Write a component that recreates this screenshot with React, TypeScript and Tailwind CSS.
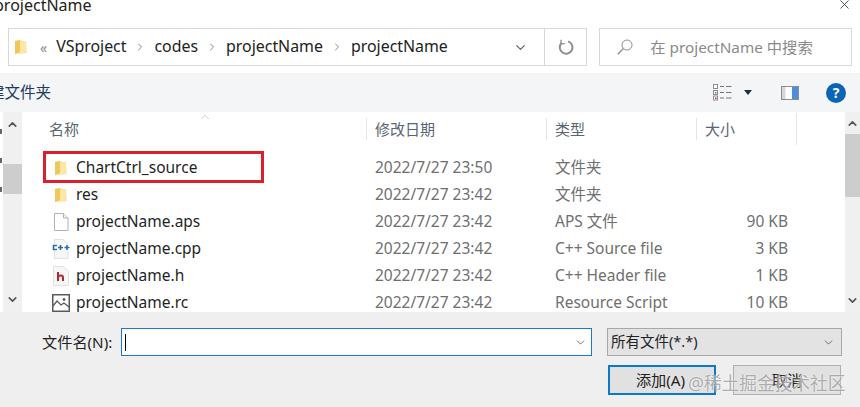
import React from 'react';
import { X, ChevronRight, ChevronDown, ChevronUp } from 'lucide-react';

const font = { fontFamily: '"Noto Sans", "Noto Sans CJK SC", sans-serif' };

function FolderIcon({ className = '' }: { className?: string }) {
  return (
    <svg width="14" height="16" viewBox="0 0 14 16" className={className}>
      <path d="M1 2 L6 1 L8 2 L12 2 L12 14 L6 14 L1 15 Z" fill="#f8dc8c" />
      <path d="M6 3 L12 2 L13 14 L6 15 L3 15 Z" fill="#fbe7a8" />
      <path d="M1 2 L6 1 L6 13 L1 15 Z" fill="#f2c65a" />
    </svg>
  );
}

function BlankIcon() {
  return (
    <svg width="16" height="18" viewBox="0 0 16 18">
      <path d="M1.5 .5 H10.5 L15 5 V17.5 H1.5 Z" fill="#fff" stroke="#aeb2b6" />
      <path d="M10.5 .5 V5 H15" fill="#f1f1f1" stroke="#aeb2b6" />
    </svg>
  );
}

function CppIcon() {
  return (
    <svg width="18" height="20" viewBox="0 0 18 20">
      <path d="M2.5 .5 H11 L16 5 V19.5 H2.5 Z" fill="#f7f7f7" stroke="#e0e0e0" />
      <rect x="0" y="5" width="18" height="7" fill="#fff" />
      <path d="M5 6.5 H1.5 V10.5 H5" fill="none" stroke="#2a6bb0" strokeWidth="1.6" />
      <path d="M6 8.5 H11 M8.5 6 V11 M12.5 8.5 H17.5 M15 6 V11" stroke="#2a6bb0" strokeWidth="1.6" />
    </svg>
  );
}

function HeaderIcon() {
  return (
    <svg width="16" height="20" viewBox="0 0 16 20">
      <path d="M.5 .5 H10 L15.5 5 V19.5 H.5 Z" fill="#f6f6f6" stroke="#e0e0e0" />
      <path d="M5 6 V15 M5 11 C6 9 10 9 10 11.5 V15" fill="none" stroke="#b5262b" strokeWidth="2" />
    </svg>
  );
}

function ImageIcon() {
  return (
    <svg width="18" height="18" viewBox="0 0 18 18">
      <rect x=".75" y=".75" width="16.5" height="16.5" fill="#fff" stroke="#5b5b5b" strokeWidth="1.5" />
      <path d="M1 12 L5 7 L9 11 L12 9 L17 13" fill="none" stroke="#5b5b5b" strokeWidth="1.3" />
      <circle cx="12" cy="5.5" r="1.4" fill="#5b5b5b" />
    </svg>
  );
}

function ViewIcon() {
  return (
    <svg width="19" height="17" viewBox="0 0 19 17">
      <g fill="#fff" stroke="#8a8f96">
        <rect x=".5" y=".5" width="4" height="4" />
        <rect x=".5" y="6.5" width="4" height="4" />
        <rect x=".5" y="12" width="4" height="4" />
      </g>
      <rect x="2" y="13.5" width="1.5" height="1.5" fill="#c0392b" />
      <rect x="2" y="8" width="1.5" height="1.5" fill="#9a6a6a" />
      <path d="M7 2.5 H11 M13 2.5 H18.5 M7 8.5 H11 M13 8.5 H18.5 M7 14 H11 M13 14 H18.5" stroke="#777" />
    </svg>
  );
}

function PaneIcon() {
  return (
    <svg width="18" height="14" viewBox="0 0 18 14">
      <rect x=".5" y=".5" width="17" height="13" fill="#fff" stroke="#8d8d8d" />
      <rect x="1" y="1" width="3.5" height="12" fill="#d7d7d7" />
      <rect x="11" y="1" width="6" height="12" fill="#4a90d9" />
    </svg>
  );
}

function RefreshIcon() {
  return (
    <svg width="16" height="16" viewBox="0 0 16 16" fill="none" stroke="#8f8f8f" strokeWidth="2">
      <path d="M10 2.4 A6.3 6.3 0 1 1 3.6 4" />
      <path d="M3 .8 V4.6 H6.8" strokeWidth="1.4" />
    </svg>
  );
}

function SearchGlyph() {
  return (
    <svg width="16" height="16" viewBox="0 0 16 16" fill="none" stroke="#8f8f8f" strokeWidth="1">
      <circle cx="10" cy="6" r="5" />
      <path d="M6.4 9.6 L.8 15.2" strokeWidth="1.4" />
    </svg>
  );
}

function FileRow({ icon, name, date, type, size }: { icon: React.ReactNode; name: string; date: string; type: string; size?: string }) {
  return (
    <div className="flex h-[27px] shrink-0 items-center text-[15.5px] whitespace-nowrap">
      <div className="flex w-[31px] justify-center">{icon}</div>
      <div className="w-[299px] text-[#1f1f1f]">{name}</div>
      <div className="w-[180px] text-[#6f6f6f]">{date}</div>
      <div className="w-[150px] text-[#6f6f6f]">{type}</div>
      <div className="w-[83px] text-right text-[#6f6f6f]">{size}</div>
    </div>
  );
}

export default function App() {
  return (
    <div className="relative flex h-[407px] w-[860px] flex-col overflow-hidden bg-white" style={font}>
      {/* title */}
      <div className="flex h-[28px] shrink-0 items-start justify-between">
        <div className="ml-[-6px] mt-[-7px] text-[16px] text-[#222]">projectName</div>
        <X className="mr-[8px] mt-[-3px] h-[15px] w-[15px] text-[#222]" strokeWidth={1.2} />
      </div>

      {/* address bar */}
      <div className="flex h-[38px] shrink-0 px-[8px]">
        <div className="flex w-[580px] items-center border border-[#d9d9d9]">
          <FolderIcon className="ml-[5px]" />
          <span className="ml-[12px] text-[14px] text-[#8a8a8a]">«</span>
          <div className="ml-[9px] flex items-center text-[15.9px] text-[#222]">
            <span>VSproject</span>
            <ChevronRight className="mx-[8px] h-[12px] w-[12px] text-[#8a8a8a]" />
            <span>codes</span>
            <ChevronRight className="mx-[8px] h-[12px] w-[12px] text-[#8a8a8a]" />
            <span>projectName</span>
            <ChevronRight className="mx-[8px] h-[12px] w-[12px] text-[#8a8a8a]" />
            <span>projectName</span>
          </div>
          <ChevronDown className="ml-auto mr-[16px] h-[15px] w-[15px] text-[#666]" />
          <div className="flex h-full w-[42px] items-center justify-center border-l border-[#d9d9d9]">
            <RefreshIcon />
          </div>
        </div>
        <div className="ml-[12px] flex w-[253px] items-center border border-[#d9d9d9]">
          <div className="ml-[17px] flex"><SearchGlyph /></div>
          <span className="ml-[17px] text-[15.3px] text-[#8a8a8a]">在 projectName 中搜索</span>
        </div>
      </div>

      {/* toolbar */}
      <div className="mt-[7px] flex h-[39px] shrink-0 items-center bg-[#f3f5f6]">
        <span className="ml-[-11px] mt-[1px] text-[15.5px] text-[#1f3a5f]">建文件夹</span>
        <div className="ml-auto flex items-center">
          <ViewIcon />
          <div className="ml-[12px] h-0 w-0 border-x-[4px] border-t-[5px] border-x-transparent border-t-[#1f2d4d]" />
          <div className="ml-[29px]"><PaneIcon /></div>
          <div className="ml-[27px] mr-[14px] flex h-[20px] w-[20px] items-center justify-center rounded-full bg-[#0a64b4] text-[14px] font-bold text-white">?</div>
        </div>
      </div>

      {/* list */}
      <div className="flex h-[200px] shrink-0 overflow-hidden">
        <div className="flex w-[3px] shrink-0 flex-col items-start bg-white pt-[17px]">
          <div className="h-[5px] w-[2px] bg-[#666]" />
          <div className="mt-[24px] h-[5px] w-[2px] bg-[#666]" />
          <div className="mt-[24px] h-[5px] w-[2px] bg-[#666]" />
        </div>
        <div className="flex w-[19px] shrink-0 flex-col items-center bg-[#f0f0f0] pb-[6px] pt-[6px]">
          <ChevronUp className="h-[13px] w-[13px] text-[#555]" strokeWidth={3} />
          <div className="mt-[33px] h-[30px] w-full bg-[#cdcdcd]" />
          <ChevronDown className="mt-auto h-[13px] w-[13px] text-[#555]" strokeWidth={3} />
        </div>
        <div className="relative min-w-0 flex-1 overflow-hidden pl-[23px]">
          <ChevronUp className="absolute left-[174px] top-[-2px] h-[14px] w-[18px] text-[#a5abb3]" strokeWidth={1} />
          <div className="mb-[8px] flex h-[34px] items-center text-[15px] text-[#5a6472]">
            <span className="w-[321px] pl-[4px]">名称</span>
            <span className="w-[180px] border-l border-[#e5e5e5] pl-[8px]">修改日期</span>
            <span className="w-[150px] border-l border-[#e5e5e5] pl-[8px]">类型</span>
            <span className="w-[100px] border-l border-[#e5e5e5] pl-[8px]">大小</span>
            <span className="h-[32px] border-l border-[#e5e5e5]" />
          </div>
          <FileRow icon={<FolderIcon />} name="ChartCtrl_source" date="2022/7/27 23:50" type="文件夹" />
          <FileRow icon={<FolderIcon />} name="res" date="2022/7/27 23:42" type="文件夹" />
          <FileRow icon={<BlankIcon />} name="projectName.aps" date="2022/7/27 23:42" type="APS 文件" size="90 KB" />
          <FileRow icon={<CppIcon />} name="projectName.cpp" date="2022/7/27 23:42" type="C++ Source file" size="3 KB" />
          <FileRow icon={<HeaderIcon />} name="projectName.h" date="2022/7/27 23:42" type="C++ Header file" size="1 KB" />
          <FileRow icon={<ImageIcon />} name="projectName.rc" date="2022/7/27 23:42" type="Resource Script" size="10 KB" />
        </div>
        <div className="flex w-[15px] shrink-0 flex-col items-center bg-[#f0f0f0] py-[5px]">
          <ChevronUp className="h-[13px] w-[13px] text-[#555]" strokeWidth={3} />
          <div className="mt-[4px] h-[63px] w-full bg-[#cdcdcd]" />
          <ChevronDown className="mt-auto h-[13px] w-[13px] text-[#555]" strokeWidth={3} />
        </div>
      </div>

      {/* bottom */}
      <div className="flex flex-1 flex-col bg-[#efefef] text-[15.2px] text-[#222]">
        <div className="mt-[16px] flex items-center">
          <span className="ml-[42px] w-[79px] whitespace-nowrap">文件名(N):</span>
          <div className="flex h-[28px] w-[471px] items-center border border-[#1979ca] bg-white">
            <div className="ml-[3px] h-[17px] w-px bg-black" />
            <ChevronDown className="ml-auto mr-[4px] h-[13px] w-[13px] text-[#555]" strokeWidth={1.5} />
          </div>
          <div className="ml-[15px] flex h-[28px] w-[235px] items-center justify-between border border-[#a8a8a8] bg-[#e3e3e3] px-[3px] text-[14.5px]">
            <span>所有文件(*.*)</span>
            <ChevronDown className="mr-[3px] h-[13px] w-[13px] text-[#555]" strokeWidth={1.5} />
          </div>
        </div>
        <div className="ml-[608px] mt-[9px] flex items-center gap-[17px]">
          <button className="h-[30px] w-[108px] border-2 border-[#0b78c8] bg-[#e1e1e1] pr-[3px]">添加(A)</button>
          <button className="h-[30px] w-[108px] border border-[#b0b0b0] bg-[#e1e1e1]">取消</button>
        </div>
      </div>

      {/* red highlight */}
      <div className="absolute left-[43px] top-[151px] h-[32px] w-[221px] border-[3px] border-[#d9202c]" />

      {/* watermark */}
      <div className="absolute left-[688px] top-[370px] whitespace-nowrap text-[17.7px] text-[#8c8c8c]/70 [text-shadow:0_0_2px_#fff]">@稀土掘金技术社区</div>
    </div>
  );
}
